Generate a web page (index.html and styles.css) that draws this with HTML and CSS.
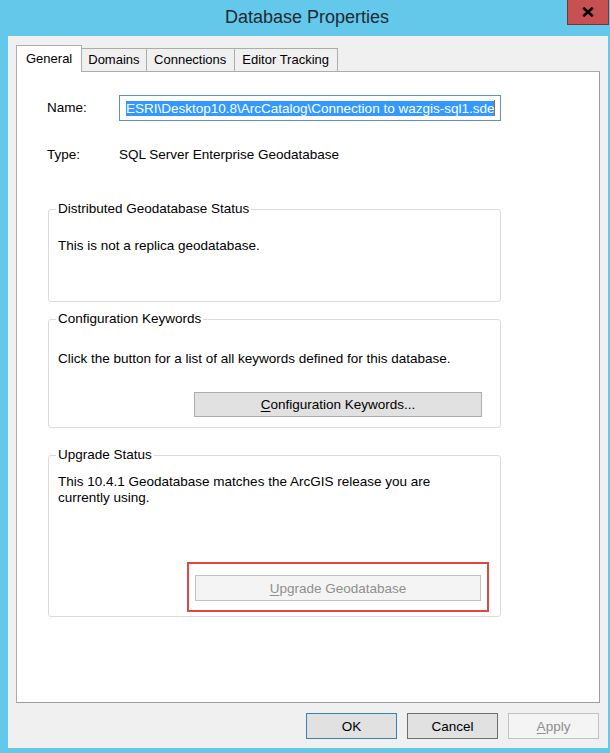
FILE: index.html
```html
<!DOCTYPE html>
<html>
<head>
<meta charset="utf-8">
<title>Database Properties</title>
<link rel="stylesheet" href="styles.css">
</head>
<body>
<div class="window">
  <div class="titlebar">
    <span></span>
    <div class="title">Database Properties</div>
    <div class="close">
      <svg width="12" height="10" viewBox="0 0 12 10"><path d="M1.2 0.8 L10.8 9.2 M10.8 0.8 L1.2 9.2" stroke="#000" stroke-width="2.6" fill="none"/></svg>
    </div>
  </div>
  <div class="client">
    <div class="tabs">
      <div class="tab active">General</div>
      <div class="tab">Domains</div>
      <div class="tab">Connections</div>
      <div class="tab">Editor Tracking</div>
    </div>
    <div class="panel">
      <div class="field name-row">
        <span class="label">Name:</span>
        <div class="textbox"><span class="sel">ESRI\Desktop10.8\ArcCatalog\Connection to wazgis-sql1.sde</span><span class="caret"></span></div>
      </div>
      <div class="field type-row">
        <span class="label">Type:</span>
        <span class="value">SQL Server Enterprise Geodatabase</span>
      </div>

      <fieldset class="group g1">
        <legend>Distributed Geodatabase Status</legend>
        <p>This is not a replica geodatabase.</p>
      </fieldset>

      <fieldset class="group g2">
        <legend>Configuration Keywords</legend>
        <p>Click the button for a list of all keywords defined for this database.</p>
        <div class="btn-row">
          <button class="btn wide"><u>C</u>onfiguration Keywords...</button>
        </div>
      </fieldset>

      <fieldset class="group g3">
        <legend>Upgrade Status</legend>
        <p>This 10.4.1 Geodatabase matches the ArcGIS release you are<br>currently using.</p>
        <div class="btn-row">
          <div class="highlight">
            <button class="btn wide upgrade disabled"><u>U</u>pgrade Geodatabase</button>
          </div>
        </div>
      </fieldset>
    </div>
    <div class="buttons">
      <button class="btn dlg default">OK</button>
      <button class="btn dlg cancel">Cancel</button>
      <button class="btn dlg disabled"><u>A</u>pply</button>
    </div>
  </div>
</div>
</body>
</html>
```
FILE: styles.css
```css
html, body {
  margin: 0;
  padding: 0;
}

body {
  background: #64c8ea;
  font-family: "Liberation Sans", Arial, sans-serif;
  font-size: 13.5px;
  color: #000;
}

.window {
  width: 610px;
  height: 753px;
  display: flex;
  flex-direction: column;
}

/* Title bar */
.titlebar {
  height: 36px;
  display: grid;
  grid-template-columns: 1fr auto 1fr;
}

.title {
  font-size: 18px;
  line-height: 34px;
  color: #1d2b33;
  padding-left: 4px;
}

.close {
  justify-self: end;
  align-self: start;
  width: 42px;
  height: 25px;
  box-sizing: border-box;
  margin-right: 1px;
  background: #c75050;
  border: 1px solid #7d3434;
  border-top: none;
  display: flex;
  align-items: center;
  justify-content: center;
}

.close svg {
  display: block;
  margin-top: -1px;
}

/* Client area */
.client {
  flex: 1;
  margin: 0 2px 5px 8px;
  background: #f0f0f0;
  padding: 9px 8px 9px 8px;
  display: flex;
  flex-direction: column;
}

/* Tabs */
.tabs {
  display: flex;
  align-items: flex-end;
  height: 26px;
}

.tab {
  height: 23px;
  box-sizing: border-box;
  border: 1px solid #acacac;
  border-bottom: none;
  margin-left: -1px;
  padding: 0 7.5px;
  font-size: 13px;
  line-height: 22px;
  background: #f0f0f0;
  white-space: nowrap;
}

.tab.active {
  height: 27px;
  margin-left: 0;
  margin-right: 0;
  margin-bottom: -1px;
  padding: 0 9px 0 9px;
  line-height: 25px;
  background: #fff;
  position: relative;
  z-index: 1;
}

.tab.active + .tab {
  margin-left: 0;
  border-left: none;
  padding-left: 6px;
  padding-right: 6px;
}

/* Panel */
.panel {
  flex: 1;
  background: #fff;
  border: 1px solid #acacac;
  border-right-color: #9c9c9c;
  border-bottom-color: #9c9c9c;
  padding-left: 30px;
  display: flex;
  flex-direction: column;
  align-items: flex-start;
}

.field {
  display: flex;
  align-items: center;
}

.label {
  width: 72px;
  line-height: 16px;
}

.name-row {
  margin-top: 23px;
}

.type-row {
  margin-top: 26px;
  line-height: 16px;
}

.textbox {
  width: 382px;
  height: 26px;
  box-sizing: border-box;
  border: 1px solid #5f8fcc;
  padding-left: 6px;
  display: flex;
  align-items: center;
  white-space: nowrap;
  overflow: hidden;
}

.sel {
  background: #3399ff;
  color: #fff;
  line-height: 15px;
}

.caret {
  flex: none;
  width: 1px;
  height: 16px;
  background: #9a6a36;
}

/* Group boxes */
.group {
  margin: 0 0 0 1px;
  width: 453px;
  box-sizing: border-box;
  border: 1px solid #dcdcdc;
  border-radius: 3px;
  padding: 0 9px;
  min-inline-size: 0;
}

.group legend {
  padding: 0 2px;
  margin-left: -2px;
  line-height: 16px;
}

.group p {
  margin: 0;
  line-height: 16px;
}

.g1 {
  margin-top: 38px;
  padding-top: 21px;
  padding-bottom: 47px;
}

.g2 {
  margin-top: 9px;
  padding-top: 24px;
  padding-bottom: 10px;
}

.g3 {
  margin-top: 19px;
  padding-top: 11px;
  padding-bottom: 4px;
}

.btn-row {
  display: flex;
  justify-content: flex-end;
}

.g2 .btn-row {
  margin-top: 25px;
  padding-right: 9px;
}

.g3 .btn-row {
  margin-top: 56px;
  padding-right: 2px;
}

.highlight {
  border: 2px solid #e5473f;
  padding: 11px 6px 9px 6px;
}

/* Buttons */
.btn {
  font-family: "Liberation Sans", Arial, sans-serif;
  font-size: 13.5px;
  color: #000;
  background: #e1e1e1;
  border: 1px solid #adadad;
  border-radius: 0;
  padding: 0;
  margin: 0;
  box-sizing: border-box;
  height: 25px;
}

.btn u {
  text-underline-offset: 2px;
}

.btn.wide {
  width: 288px;
}

.btn.upgrade {
  width: 286px;
  height: 26px;
}

.btn.disabled {
  background: #f4f4f4;
  border-color: #c2c2c2;
  color: #8f8f8f;
}

.buttons {
  display: flex;
  justify-content: flex-end;
  gap: 10px;
  margin-top: 10px;
  padding-right: 1px;
}

.btn.dlg {
  width: 91px;
  height: 26px;
}

.btn.default {
  border-color: #3c7fb1;
}

.btn.cancel {
  border-color: #6e6e6e;
}
```
